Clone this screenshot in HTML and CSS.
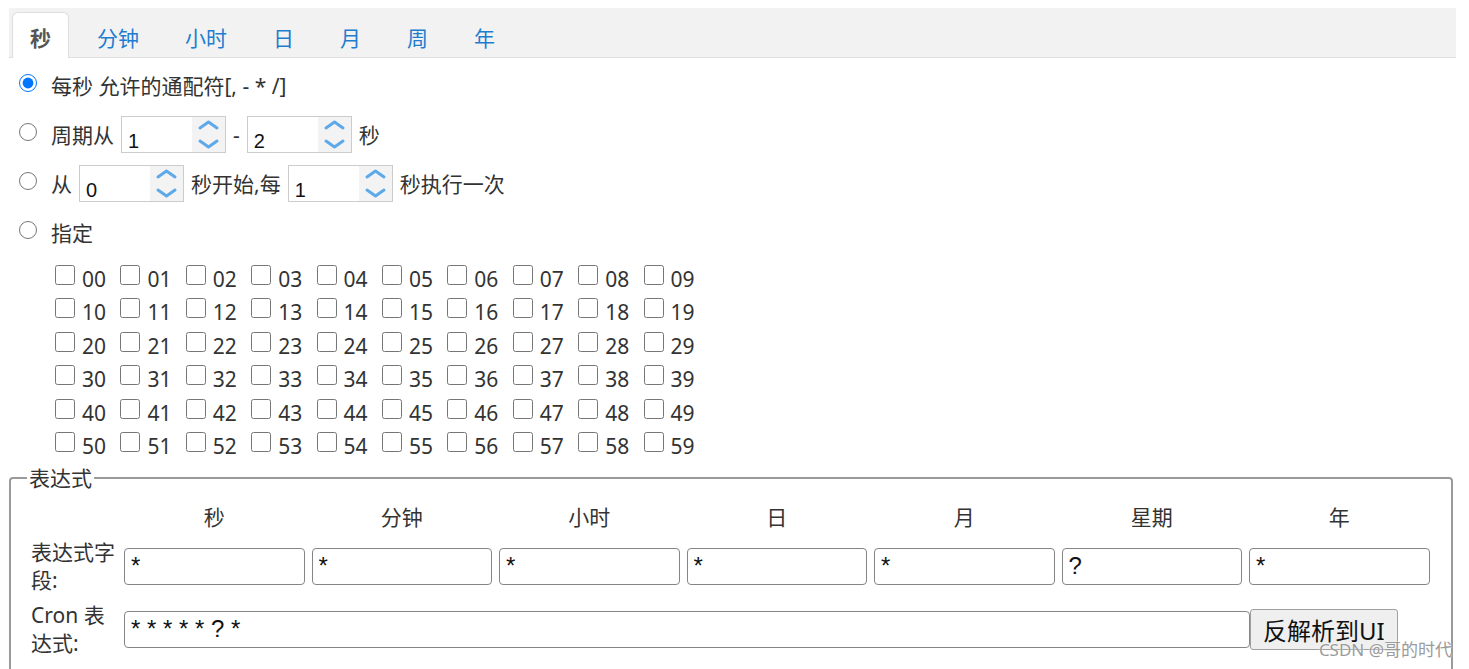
FILE: index.html
```html
<!DOCTYPE html>
<html>
<head>
    <meta charset="utf-8" />
    <title>Cron 表达式生成</title>
    <link rel="stylesheet" href="styles.css">
</head>
<body>
    <ul class="tabs">
        <li class="tab active">秒</li>
        <li class="tab">分钟</li>
        <li class="tab">小时</li>
        <li class="tab">日</li>
        <li class="tab">月</li>
        <li class="tab">周</li>
        <li class="tab">年</li>
    </ul>

    <div class="pane">
        <label class="opt"><input type="radio" name="second" checked>每秒 允许的通配符[, - * /]</label>
        <div class="opt">
            <input type="radio" name="second">周期从
            <span class="num"><input type="text" value="1"><span class="spin"><svg width="33" height="35" viewBox="0 0 33 35"><path d="M8 11 L16.5 5 L25 11 M8 24 L16.5 30 L25 24" /></svg></span></span>
            -
            <span class="num"><input type="text" value="2"><span class="spin"><svg width="33" height="35" viewBox="0 0 33 35"><path d="M8 11 L16.5 5 L25 11 M8 24 L16.5 30 L25 24" /></svg></span></span>
            秒
        </div>
        <div class="opt">
            <input type="radio" name="second">从
            <span class="num"><input type="text" value="0"><span class="spin"><svg width="33" height="35" viewBox="0 0 33 35"><path d="M8 11 L16.5 5 L25 11 M8 24 L16.5 30 L25 24" /></svg></span></span>
            秒开始,每
            <span class="num"><input type="text" value="1"><span class="spin"><svg width="33" height="35" viewBox="0 0 33 35"><path d="M8 11 L16.5 5 L25 11 M8 24 L16.5 30 L25 24" /></svg></span></span>
            秒执行一次
        </div>
        <label class="opt"><input type="radio" name="second">指定</label>

        <div class="checks">
            <label class="chk"><input type="checkbox"><span>00</span></label><label class="chk"><input type="checkbox"><span>01</span></label><label class="chk"><input type="checkbox"><span>02</span></label><label class="chk"><input type="checkbox"><span>03</span></label><label class="chk"><input type="checkbox"><span>04</span></label><label class="chk"><input type="checkbox"><span>05</span></label><label class="chk"><input type="checkbox"><span>06</span></label><label class="chk"><input type="checkbox"><span>07</span></label><label class="chk"><input type="checkbox"><span>08</span></label><label class="chk"><input type="checkbox"><span>09</span></label>
            <label class="chk"><input type="checkbox"><span>10</span></label><label class="chk"><input type="checkbox"><span>11</span></label><label class="chk"><input type="checkbox"><span>12</span></label><label class="chk"><input type="checkbox"><span>13</span></label><label class="chk"><input type="checkbox"><span>14</span></label><label class="chk"><input type="checkbox"><span>15</span></label><label class="chk"><input type="checkbox"><span>16</span></label><label class="chk"><input type="checkbox"><span>17</span></label><label class="chk"><input type="checkbox"><span>18</span></label><label class="chk"><input type="checkbox"><span>19</span></label>
            <label class="chk"><input type="checkbox"><span>20</span></label><label class="chk"><input type="checkbox"><span>21</span></label><label class="chk"><input type="checkbox"><span>22</span></label><label class="chk"><input type="checkbox"><span>23</span></label><label class="chk"><input type="checkbox"><span>24</span></label><label class="chk"><input type="checkbox"><span>25</span></label><label class="chk"><input type="checkbox"><span>26</span></label><label class="chk"><input type="checkbox"><span>27</span></label><label class="chk"><input type="checkbox"><span>28</span></label><label class="chk"><input type="checkbox"><span>29</span></label>
            <label class="chk"><input type="checkbox"><span>30</span></label><label class="chk"><input type="checkbox"><span>31</span></label><label class="chk"><input type="checkbox"><span>32</span></label><label class="chk"><input type="checkbox"><span>33</span></label><label class="chk"><input type="checkbox"><span>34</span></label><label class="chk"><input type="checkbox"><span>35</span></label><label class="chk"><input type="checkbox"><span>36</span></label><label class="chk"><input type="checkbox"><span>37</span></label><label class="chk"><input type="checkbox"><span>38</span></label><label class="chk"><input type="checkbox"><span>39</span></label>
            <label class="chk"><input type="checkbox"><span>40</span></label><label class="chk"><input type="checkbox"><span>41</span></label><label class="chk"><input type="checkbox"><span>42</span></label><label class="chk"><input type="checkbox"><span>43</span></label><label class="chk"><input type="checkbox"><span>44</span></label><label class="chk"><input type="checkbox"><span>45</span></label><label class="chk"><input type="checkbox"><span>46</span></label><label class="chk"><input type="checkbox"><span>47</span></label><label class="chk"><input type="checkbox"><span>48</span></label><label class="chk"><input type="checkbox"><span>49</span></label>
            <label class="chk"><input type="checkbox"><span>50</span></label><label class="chk"><input type="checkbox"><span>51</span></label><label class="chk"><input type="checkbox"><span>52</span></label><label class="chk"><input type="checkbox"><span>53</span></label><label class="chk"><input type="checkbox"><span>54</span></label><label class="chk"><input type="checkbox"><span>55</span></label><label class="chk"><input type="checkbox"><span>56</span></label><label class="chk"><input type="checkbox"><span>57</span></label><label class="chk"><input type="checkbox"><span>58</span></label><label class="chk"><input type="checkbox"><span>59</span></label>
        </div>
    </div>

    <fieldset class="expr">
        <legend>表达式</legend>
        <div class="expr-grid">
            <span></span>
            <span class="head">秒</span>
            <span class="head">分钟</span>
            <span class="head">小时</span>
            <span class="head">日</span>
            <span class="head">月</span>
            <span class="head">星期</span>
            <span class="head">年</span>

            <span class="lbl">表达式字段:</span>
            <input class="field" type="text" value="*">
            <input class="field" type="text" value="*">
            <input class="field" type="text" value="*">
            <input class="field" type="text" value="*">
            <input class="field" type="text" value="*">
            <input class="field" type="text" value="?">
            <input class="field" type="text" value="*">

            <span class="lbl">Cron 表达式:</span>
            <div class="cron-line">
                <input class="field cron-text" type="text" value="* * * * * ? *">
                <button type="button" class="parse">反解析到UI</button>
            </div>
        </div>
    </fieldset>

    <div class="mark">CSDN @哥的时代</div>
</body>
</html>
```

FILE: styles.css
```css
* {
    box-sizing: border-box;
}

body {
    margin: 8px 13px 0 9px;
    font-family: "Noto Sans", "Noto Sans CJK SC", sans-serif;
    font-size: 21px;
    color: #333;
    overflow: hidden;
}

/* tab strip */
.tabs {
    display: flex;
    align-items: flex-end;
    gap: 10px;
    height: 50px;
    margin: 0;
    padding: 0 0 0 3px;
    list-style: none;
    background: #f2f2f2;
    border-bottom: 1px solid #dedede;
}

.tab {
    height: 46px;
    margin-bottom: -1px;
    padding: 6px 17px 0;
    line-height: 39px;
    color: #1f7dcf;
    border: 1px solid transparent;
    border-bottom: none;
    border-radius: 6px 6px 0 0;
}

.tab.active {
    background: #fff;
    border-color: #dedede;
    color: #555;
    font-weight: bold;
}

/* options */
.pane {
    margin-top: 3px;
}

.opt {
    display: flex;
    align-items: center;
    gap: 6px;
    height: 49px;
    line-height: 28px;
}

.opt input[type=radio] {
    width: 18px;
    height: 18px;
    margin: 0 8px 6px 10px;
}

.num {
    display: inline-flex;
    width: 105px;
    height: 37px;
    margin: 0 1px;
    border: 1px solid #cccccc;
    background: #fff;
}

.num input {
    width: 70px;
    border: none;
    outline: none;
    padding: 13px 0 0 6px;
    font-family: "Liberation Sans", sans-serif;
    font-size: 20px;
    line-height: 20px;
    color: #111;
    background: transparent;
}

.spin {
    width: 33px;
    background: #f3f3f3;
}

.spin svg {
    display: block;
}

.spin path {
    fill: none;
    stroke: #5ea9ea;
    stroke-width: 3;
    stroke-linecap: round;
    stroke-linejoin: round;
}

/* second checkboxes */
.checks {
    display: grid;
    grid-template-columns: repeat(10, 65.4px);
    margin: 6px 0 0 46px;
}

.chk {
    display: flex;
    align-items: flex-start;
    height: 33.4px;
    line-height: 33px;
}

.chk input {
    width: 20px;
    height: 20px;
    margin: 2px 7px 0 0;
}

/* expression box */
.expr {
    margin: 1px 3px 0 0;
    padding: 11px 20px 20px;
    border: 2px solid #9a9a9a;
    border-radius: 4px;
}

.expr legend {
    margin-left: -4px;
    padding: 0 2px;
    line-height: 28px;
}

.expr-grid {
    display: grid;
    grid-template-columns: 86px repeat(7, 180.5px);
    column-gap: 7px;
    row-gap: 7px;
    align-items: center;
}

.head {
    text-align: center;
    line-height: 28px;
}

.lbl {
    line-height: 28px;
}

.field {
    height: 37px;
    width: 100%;
    padding: 0 6px;
    border: 1px solid #858585;
    border-radius: 4px;
    font-family: "Liberation Sans", sans-serif;
    font-size: 24px;
    color: #111;
}

.cron-line {
    grid-column: 2 / 9;
    display: flex;
    align-items: center;
}

.cron-line .cron-text {
    width: 1126px;
}

.parse {
    height: 41px;
    padding: 0 12px;
    border: 1px solid #a0a0a0;
    border-radius: 3px;
    background: #efefef;
    font-family: "Noto Sans", "Noto Sans CJK SC", sans-serif;
    font-size: 24px;
    color: #111;
}

.mark {
    position: absolute;
    right: 17px;
    bottom: 8px;
    font-size: 17px;
    color: #9b9b9b;
    text-shadow: 0 0 2px #fff;
}
```
